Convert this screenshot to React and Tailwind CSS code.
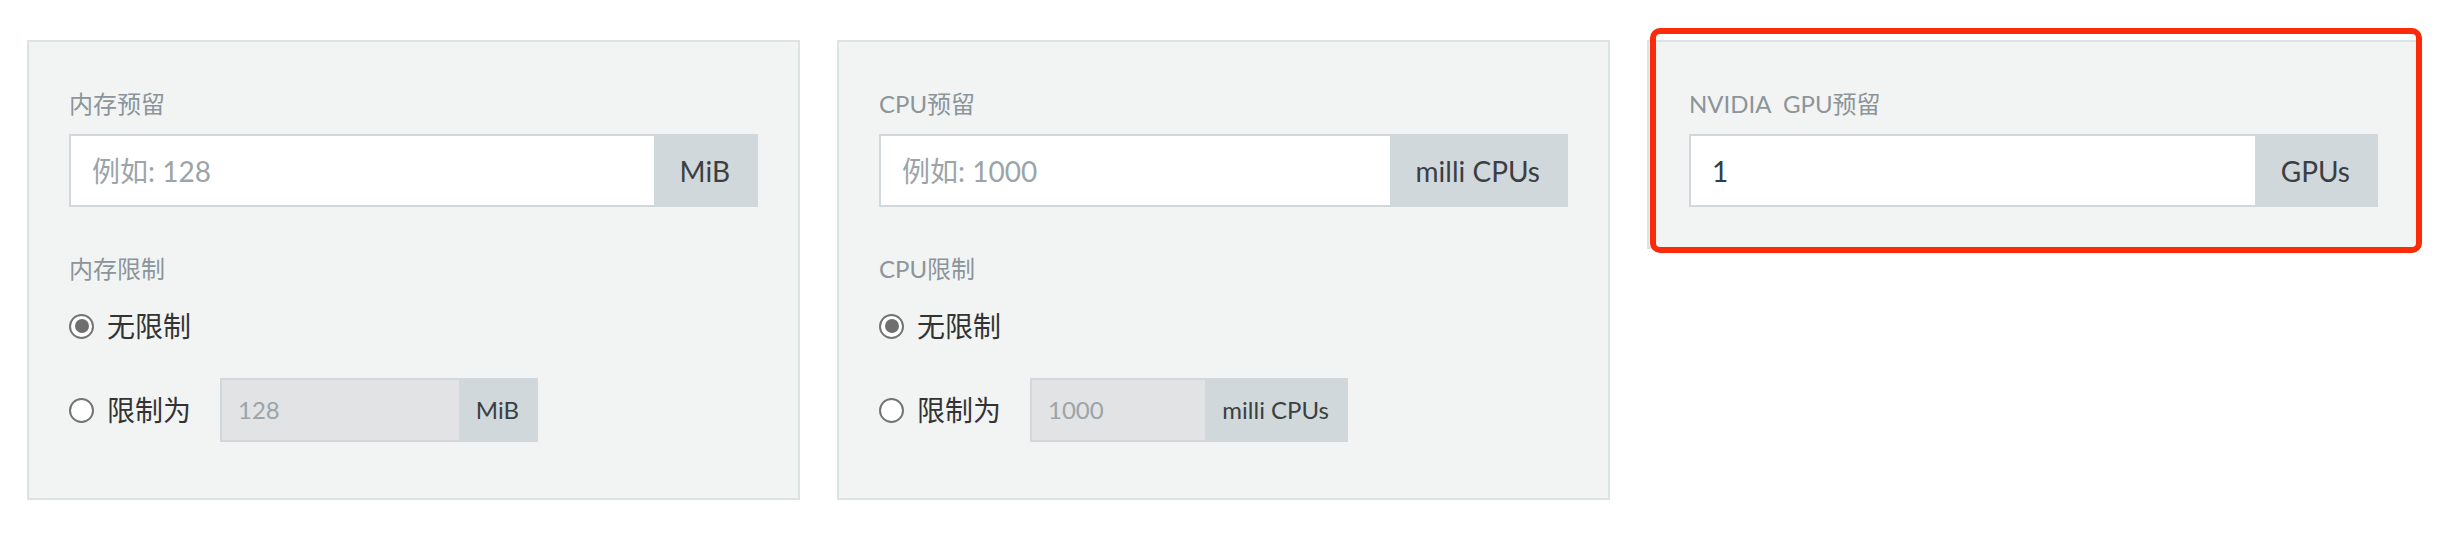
import React from "react"

const FONT = "font-['Lato','Noto_Sans_CJK_SC',sans-serif]"

function Radio({ checked }) {
  return (
    <span className="w-[25px] h-[25px] rounded-full border-2 border-[#747474] bg-white flex items-center justify-center shrink-0">
      {checked && <span className="w-[14px] h-[14px] rounded-full bg-[#6f6f6f]" />}
    </span>
  )
}

function BigInput({ placeholder, value, unit }) {
  return (
    <div className="mt-[12px] flex h-[73px] border-2 border-[#d0d8db]">
      <div className="flex-1 bg-white flex items-center px-[21px] text-[28px]">
        {value ? (
          <span className="text-[#2c3e50]">{value}</span>
        ) : (
          <span className="text-[#9ba4a9]">{placeholder}</span>
        )}
      </div>
      <div className="bg-[#d0d8db] flex items-center px-[26px] text-[28px] text-[#3b3f43] whitespace-nowrap">
        {unit}
      </div>
    </div>
  )
}

function Label({ children, className = "" }) {
  return <div className={`text-[24px] leading-[36px] text-[#8b959a] ${className}`}>{children}</div>
}

function LimitGroup({ title, value, unit }) {
  return (
    <>
      <Label className="mt-[44px]">{title}</Label>
      <div className="mt-[19px] h-[40px] flex items-center gap-[13px]">
        <Radio checked />
        <span className="text-[28px] text-[#333] leading-none">无限制</span>
      </div>
      <div className="mt-[32px] h-[64px] flex items-center">
        <Radio />
        <span className="ml-[13px] text-[28px] text-[#333] leading-none">限制为</span>
        <div className="ml-[29px] w-[318px] h-[64px] flex border-2 border-[#d0d8db]">
          <div className="flex-1 bg-[#e1e3e5] flex items-center pl-[16px] text-[24px] text-[#9ba4a9]">{value}</div>
          <div className="bg-[#d0d8db] flex items-center px-[17px] text-[24px] text-[#3b3f43] whitespace-nowrap">{unit}</div>
        </div>
      </div>
    </>
  )
}

function Panel({ children, className = "" }) {
  return (
    <div className={`bg-[#f2f4f4] border-2 border-[#dce3e5] px-[40px] pt-[44px] ${className}`}>
      {children}
    </div>
  )
}

export default function App() {
  return (
    <div className={`w-[2450px] h-[550px] bg-white ${FONT}`}>
      <div className="pt-[40px] pl-[27px] pr-[30px] grid grid-cols-3 gap-[37px] items-start">
        <Panel className="pb-[56px]">
          <Label>内存预留</Label>
          <BigInput placeholder="例如: 128" unit="MiB" />
          <LimitGroup title="内存限制" value="128" unit="MiB" />
        </Panel>

        <Panel className="pb-[56px]">
          <Label>CPU预留</Label>
          <BigInput placeholder="例如: 1000" unit="milli CPUs" />
          <LimitGroup title="CPU限制" value="1000" unit="milli CPUs" />
        </Panel>

        <div className="relative">
          <Panel className="pb-[40px]">
            <Label>NVIDIA&nbsp; GPU预留</Label>
            <BigInput value="1" unit="GPUs" />
          </Panel>
          <div className="absolute top-[-12px] left-[3px] right-[-2px] bottom-[-4px] border-[6px] border-[#fb2a08] rounded-[10px] pointer-events-none" />
        </div>
      </div>
    </div>
  )
}
